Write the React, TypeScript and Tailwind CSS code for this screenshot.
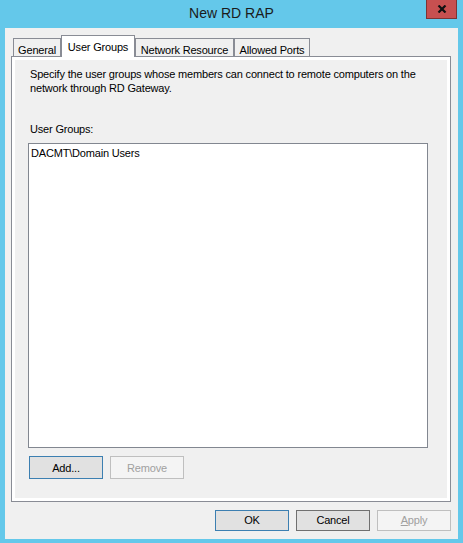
import React from 'react';

// Onglets de la boîte de dialogue
const tabs = [
  { label: 'General', width: 'w-[48px]' },
  { label: 'User Groups', width: 'w-[74px]', active: true },
  { label: 'Network Resource', width: 'w-[99px]' },
  { label: 'Allowed Ports', width: 'w-[76px]' },
];

function DialogButton({
  children,
  variant = 'normal',
  className = '',
}: {
  children: React.ReactNode;
  variant?: 'default' | 'normal' | 'disabled';
  className?: string;
}) {
  const styles =
    variant === 'default'
      ? 'border-[#3c7fb1] bg-[#e1e1e1] text-black'
      : variant === 'disabled'
      ? 'border-[#bfbfbf] bg-[#f4f4f4] text-[#a0a0a0]'
      : 'border-[#707070] bg-[#e1e1e1] text-black';
  return (
    <div className={`w-[74px] border flex items-center justify-center ${styles} ${className}`}>
      {children}
    </div>
  );
}

export default function App() {
  return (
    <div className="w-[463px] h-[543px] bg-[#64c8ea] flex flex-col px-[5px] pb-[4px] font-['Liberation_Sans',Arial,sans-serif] text-[11px] tracking-[-0.18px] text-black">
      {/* Barre de titre */}
      <div className="h-[28px] relative flex items-center justify-center">
        <span className="text-[14px] tracking-normal text-[#1b1b1b] -mt-[1px]">New RD RAP</span>
        <div className="absolute right-[1px] top-0 w-[31px] h-[19px] bg-[#c75050] border border-t-0 border-[#7d3434] flex items-center justify-center">
          <svg width="10" height="8" viewBox="0 0 10 8">
            <path d="M1.5 0.5 L8.5 7.5 M8.5 0.5 L1.5 7.5" stroke="#111" strokeWidth="2.2" />
          </svg>
        </div>
      </div>

      {/* Zone client */}
      <div className="flex-1 bg-[#f0f0f0] flex flex-col">
        <div className="h-[29px] -mb-[1px] flex items-end pl-[8px] relative z-10">
          {tabs.map((t) =>
            t.active ? (
              <div
                key={t.label}
                className={`${t.width} h-[22px] bg-white border border-b-0 border-[#898c95] flex justify-center pt-[3px]`}
              >
                {t.label}
              </div>
            ) : (
              <div
                key={t.label}
                className={`${t.width} h-[18px] mb-[1px] bg-[#f0f0f0] border border-b-0 border-[#898c95] flex justify-center pt-[3px]`}
              >
                {t.label}
              </div>
            )
          )}
        </div>

        {/* Panneau de l'onglet */}
        <div className="ml-[6px] w-[440px] h-[446px] border border-[#898c95] bg-white p-[3px]">
          <div className="h-full bg-[#f0f0f0] px-[13px] pt-[7px] leading-[14px]">
            <p className="ml-[2px]">
              Specify the user groups whose members can connect to remote computers on the
              <br />
              network through RD Gateway.
            </p>
            <div className="ml-[2px] mt-[27px]">User Groups:</div>
            <div className="mt-[7px] w-[400px] h-[305px] border border-[#828790] bg-white pl-[2px] pt-[2px]">
              DACMT\Domain Users
            </div>
            <div className="mt-[8px] ml-[1px] flex gap-[7px]">
              <DialogButton variant="default" className="h-[23px]">Add...</DialogButton>
              <DialogButton variant="disabled" className="h-[23px]">Remove</DialogButton>
            </div>
          </div>
        </div>

        {/* Boutons du bas */}
        <div className="mt-[8px] flex justify-end gap-[7px] pr-[7px]">
          <DialogButton variant="default" className="h-[21px]">OK</DialogButton>
          <DialogButton className="h-[21px]">Cancel</DialogButton>
          <DialogButton variant="disabled" className="h-[21px]">
            <span>
              <span className="underline">A</span>pply
            </span>
          </DialogButton>
        </div>
      </div>
    </div>
  );
}
